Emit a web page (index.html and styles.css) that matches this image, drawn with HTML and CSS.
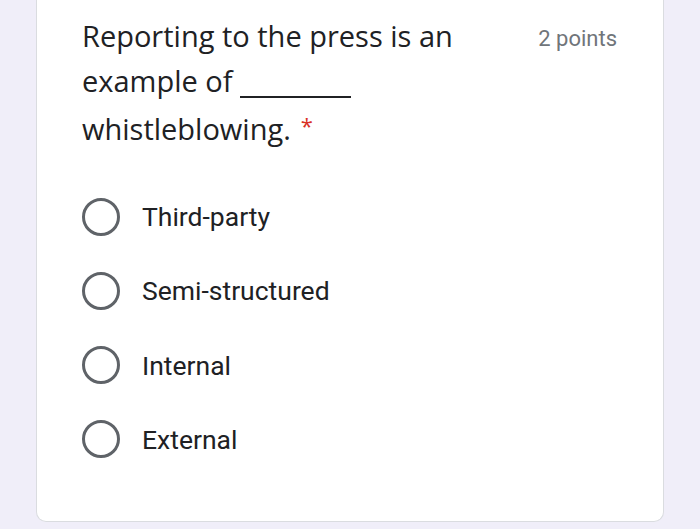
FILE: index.html
```html
<!DOCTYPE html>
<html>
<head>
<meta charset="utf-8">
<link rel="stylesheet" href="styles.css">
</head>
<body>
<div class="page">
  <div class="card">
    <div class="header">
      <div class="title">Reporting to the press is an example of <span class="blank"></span> whistleblowing.<span class="req">*</span></div>
      <div class="points">2 points</div>
    </div>
    <div class="options">
      <div class="option"><span class="radio"></span><span class="label">Third-party</span></div>
      <div class="option"><span class="radio"></span><span class="label">Semi-structured</span></div>
      <div class="option"><span class="radio"></span><span class="label">Internal</span></div>
      <div class="option"><span class="radio"></span><span class="label">External</span></div>
    </div>
  </div>
</div>
</body>
</html>
```

FILE: styles.css
```css
html, body {
  margin: 0;
  padding: 0;
  background: #f0eef9;
}
.page {
  padding: 0 36px;
  height: 529px;
  overflow: hidden;
}
.card {
  background: #fff;
  border: 1.5px solid #dadce0;
  border-top: none;
  border-radius: 0 0 10px 10px;
  padding: 14px 46px 63px 45px;
}
.header {
  display: flex;
  justify-content: space-between;
  align-items: flex-start;
}
.title {
  font-family: "Open Sans", sans-serif;
  font-size: 29px;
  line-height: 44.5px;
  color: #202124;
  width: 410px;
}
.blank {
  display: inline-block;
  width: 111px;
  height: 0;
  border-bottom: 2px solid #202124;
  vertical-align: -6px;
}
.req {
  color: #d93025;
  font-size: 22px;
  margin-left: 10px;
  vertical-align: 6px;
}
.points {
  font-family: Roboto, sans-serif;
  font-size: 22px;
  color: #70757a;
  padding-top: 12px;
}
.options {
  margin-top: 46px;
  display: flex;
  flex-direction: column;
  gap: 36.3px;
}
.option {
  display: flex;
  align-items: center;
  height: 38px;
}
.radio {
  width: 32px;
  height: 32px;
  border: 3px solid #5f6368;
  border-radius: 50%;
  flex: none;
}
.label {
  font-family: Roboto, sans-serif;
  font-size: 26.5px;
  color: #202124;
  margin-left: 22px;
}
```
